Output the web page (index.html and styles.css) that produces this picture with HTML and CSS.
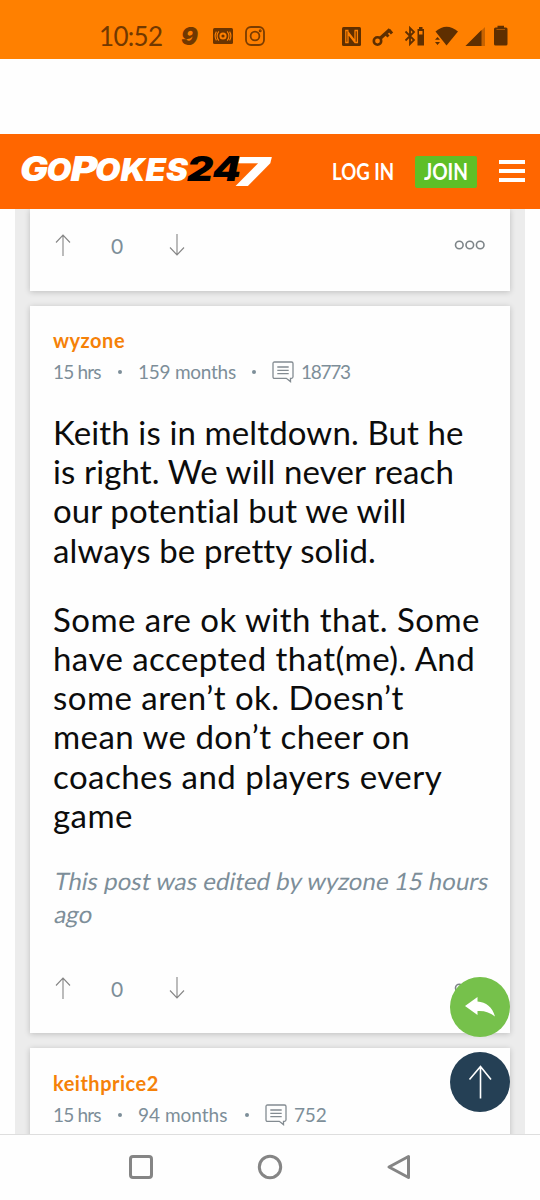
FILE: index.html
```html
<!DOCTYPE html>
<html lang="en">
<head>
    <meta charset="UTF-8">
    <meta name="viewport" content="width=device-width, initial-scale=1.0">
    <title>GoPokes247</title>
    <link rel="stylesheet" href="styles.css">
</head>
<body>
    <svg class="symbols">
        <symbol id="up" viewBox="0 0 16 22"><path d="M8 1.2V22M1 8.5L8 1L15 8.5"/></symbol>
        <symbol id="down" viewBox="0 0 16 22"><path d="M8 0V20.8M1 13.5L8 21L15 13.5"/></symbol>
        <symbol id="dots" viewBox="0 0 32 10"><circle cx="5.3" cy="5" r="3.8"/><circle cx="15.8" cy="5" r="3.8"/><circle cx="26.2" cy="5" r="3.8"/></symbol>
        <symbol id="comment" viewBox="0 0 22 22"><path d="M2.5 1H19.5Q21 1 21 2.5V15.8Q21 17.3 19.5 17.3H18.5V20.6L14.3 17.3H2.5Q1 17.3 1 15.8V2.5Q1 1 2.5 1ZM5.3 6H16.7M5.3 9.3H16.7M5.3 12.6H16.7"/></symbol>
    </svg>

    <div class="status-bar">
        <span class="clock">10:52</span>
        <span class="nine">9</span>
        <svg class="cast" width="20" height="16" viewBox="0 0 20 16">
            <rect width="20" height="16" rx="1.5" fill="#6b3400"/>
            <circle cx="10" cy="8" r="2.6" fill="none" stroke="#ff8000" stroke-width="2"/>
            <path d="M5.8 3.3Q2.3 8 5.8 12.7M14.2 3.3Q17.7 8 14.2 12.7M3.4 3.6Q.8 8 3.4 12.4M16.6 3.6Q19.2 8 16.6 12.4" fill="none" stroke="#ff8000" stroke-width="1.1"/>
        </svg>
        <svg class="insta" width="20" height="20" viewBox="0 0 20 20" fill="none" stroke="#7a3c00" stroke-width="1.8">
            <rect x="1" y="1" width="18" height="18" rx="5"/>
            <circle cx="10" cy="10" r="4.4"/>
            <circle cx="15.2" cy="4.8" r=".6"/>
        </svg>
        <svg class="system" width="166" height="22" viewBox="0 0 166 22" fill="#5f2f00">
            <rect x="0" y="2" width="19" height="19" rx="1.5"/>
            <path d="M6.5 5.5H3.8V17.500H6V7L13 16V5.500M12.500 5.500H15.400V17.500H13L6 8.500" fill="none" stroke="#ff8000" stroke-width="1.3"/>
            <circle cx="35.500" cy="16" r="3.700" fill="none" stroke="#5f2f00" stroke-width="2.600"/>
            <path d="M38 13.500L48 4.500" fill="none" stroke="#5f2f00" stroke-width="3.600"/>
            <path d="M43.500 8.500L46.500 11.500M47 5L50 8.500" fill="none" stroke="#5f2f00" stroke-width="3"/>
            <path d="M63.500 6.500L72 15L68 19V3L72 7L63.500 15.500" fill="none" stroke="#5f2f00" stroke-width="1.8"/>
            <path d="M75.500 4H77V2H80.500V4H82V20.500H75.500ZM77 6V9.500H80.500V6Z" fill-rule="evenodd"/>
            <path d="M93.500 6.500Q104.500 -3 116 6.500L104.500 20.500Z"/>
            <path d="M93 14.800L95.500 12L98 14.800ZM93 17L95.500 20L98 17Z"/>
            <path d="M123.500 21L143 2V21Z" opacity=".35"/>
            <path d="M123.500 21L139.500 5V21Z"/>
            <path d="M153.500 2.500H155.500V.8H162V2.500H164Q165.500 2.500 165.500 4V19Q165.500 20.500 164 20.500H153.500Q152 20.500 152 19V4Q152 2.500 153.500 2.500Z"/>
            <path d="M154.500 4.500H163" stroke="#ff8000" stroke-width=".8" opacity=".6"/>
        </svg>
    </div>

    <header class="site-header">
        <svg class="logo" width="256" height="60" viewBox="0 0 256 60">
            <g font-family="Inter, 'Liberation Sans', sans-serif" font-weight="900" font-style="italic" fill="#fff">
                <text x="0" y="39" font-size="34" textLength="28" lengthAdjust="spacingAndGlyphs">G</text>
                <text x="26.500" y="39" font-size="31" textLength="25" lengthAdjust="spacingAndGlyphs">O</text>
                <text x="50.500" y="39" font-size="34" textLength="27" lengthAdjust="spacingAndGlyphs">P</text>
                <text x="75" y="39" font-size="31" textLength="93" lengthAdjust="spacingAndGlyphs">OKES</text>
                <text x="167" y="39" font-size="34" textLength="54" lengthAdjust="spacingAndGlyphs" fill="#000">24</text>
                <text x="214" y="44" font-size="40" textLength="35" lengthAdjust="spacingAndGlyphs">7</text>
            </g>
        </svg>
        <a class="login"><span>LOG IN</span></a>
        <a class="join"><span>JOIN</span></a>
        <div class="menu"><i></i><i></i><i></i></div>
    </header>

    <main class="content">
        <div class="thread">
            <article class="post post-prev">
                <div class="actions">
                    <svg class="arrow"><use href="#up"/></svg>
                    <span class="votes">0</span>
                    <svg class="arrow"><use href="#down"/></svg>
                    <svg class="dots"><use href="#dots"/></svg>
                </div>
            </article>

            <article class="post post-main">
                <h2 class="author">wyzone</h2>
                <div class="meta">
                    <span class="age">15 hrs</span><b></b><span class="member">159 months</span><b></b>
                    <svg class="comment"><use href="#comment"/></svg><span class="count">18773</span>
                </div>
                <div class="body">
                    <p>Keith is in meltdown. But he<br>is right. We will never reach<br>our potential but we will<br>always be pretty solid.</p>
                    <p>Some are ok with that. Some<br>have accepted that(me). And<br>some aren’t ok. Doesn’t<br>mean we don’t cheer on<br>coaches and players every<br>game</p>
                </div>
                <p class="edited"><span>This post was edited by wyzone 15 hours</span> <span>ago</span></p>
                <div class="actions">
                    <svg class="arrow"><use href="#up"/></svg>
                    <span class="votes">0</span>
                    <svg class="arrow"><use href="#down"/></svg>
                    <svg class="dots"><use href="#dots"/></svg>
                </div>
            </article>

            <article class="post post-next">
                <h2 class="author">keithprice2</h2>
                <div class="meta">
                    <span class="age">15 hrs</span><b></b><span class="member member-short">94 months</span><b></b>
                    <svg class="comment"><use href="#comment"/></svg><span class="count">752</span>
                </div>
            </article>
        </div>
    </main>

    <div class="floating">
        <div class="fab reply">
            <svg width="30" height="20" viewBox="0 0 30 20"><path d="M0 9L12.500 0V4.500C21 5 27.500 10 30 19.500C25.500 15.500 19 13.500 12.500 14V18Z" fill="#fff"/></svg>
        </div>
        <div class="fab top">
            <svg width="24" height="34" viewBox="0 0 24 34" fill="none" stroke="#fff" stroke-width="1.6"><path d="M12.500 1.500V33.500M1.500 14.500L12.500 1.500L23 14.500"/></svg>
        </div>
    </div>

    <nav class="nav-bar">
        <svg width="26" height="26" viewBox="0 0 26 26"><rect x="2.500" y="2.500" width="21" height="21" rx="2.500"/></svg>
        <svg width="26" height="26" viewBox="0 0 26 26"><circle cx="13" cy="13" r="10.700"/></svg>
        <svg width="26" height="26" viewBox="0 0 26 26"><path d="M3 13L22.500 2.500V23.500Z"/></svg>
    </nav>
</body>
</html>
```
FILE: styles.css
```css
* {
    box-sizing: border-box;
}
body {
    margin: 0;
    width: 540px;
    height: 1200px;
    overflow: hidden;
    position: relative;
    display: flex;
    flex-direction: column;
    font-family: Lato, "Liberation Sans", sans-serif;
    background: #fefefe;
    color: #0c0c0c;
}
h2, p {
    margin: 0;
}
svg {
    display: block;
    flex: none;
}
.symbols {
    position: absolute;
    width: 0;
    height: 0;
}

/* status bar */
.status-bar {
    height: 59px;
    flex: none;
    display: flex;
    align-items: center;
    padding: 13px 32px 0 99px;
    background: #ff8000;
    color: #713800;
}
.clock {
    width: 82px;
    font-size: 26px;
    letter-spacing: -0.7px;
}
.nine {
    width: 32px;
    font-family: Inter, sans-serif;
    font-size: 25px;
    font-weight: 900;
    font-style: italic;
}
.insta {
    margin-left: 12px;
}
.system {
    margin-left: auto;
}

/* site header */
.site-header {
    height: 75px;
    flex: none;
    margin-top: 75px;
    padding-left: 20px;
    display: flex;
    align-items: center;
    background: #ff6600;
    color: #fff;
    font-size: 23px;
    font-weight: bold;
}
.login, .join {
    white-space: nowrap;
}
.login span, .join span {
    display: inline-block;
    transform-origin: 0 50%;
}
.login {
    width: 83px;
    margin-left: 56px;
    margin-top: -2px;
}
.login span {
    transform: scaleX(0.81);
}
.join {
    width: 62px;
    height: 32px;
    padding-left: 9px;
    line-height: 30px;
    border-radius: 2px;
    background: #5fbf27;
}
.join span {
    transform: scaleX(0.83);
}
.menu {
    display: flex;
    flex-direction: column;
    gap: 5px;
    margin-left: 22px;
    margin-top: -2px;
}
.menu i {
    width: 26px;
    height: 4px;
    background: #fff;
}

/* thread */
.content {
    height: 925px;
    flex: none;
    padding: 0 15px;
    overflow: hidden;
}
.thread {
    height: 925px;
    padding: 0 15px;
    display: flex;
    flex-direction: column;
    gap: 15px;
    background: #ececec;
}
.post {
    flex: none;
    padding: 0 23px;
    background: #fefefe;
    box-shadow: 0 1px 6px rgba(0, 0, 0, 0.2);
}
.post-prev {
    height: 82px;
    padding-top: 25px;
}
.post-main {
    height: 727px;
    padding-top: 22px;
}
.post-next {
    height: 110px;
    padding-top: 23px;
}
.author {
    font-size: 20px;
    line-height: 24px;
    letter-spacing: 0.5px;
    color: #f58108;
}
.meta {
    height: 24px;
    margin-top: 7px;
    display: flex;
    align-items: center;
    font-size: 19px;
    color: #7d8e99;
    white-space: nowrap;
}
.meta b {
    width: 4px;
    height: 4px;
    margin: 2px 16px 0;
    border-radius: 50%;
    background: #7d8e99;
}
.age {
    width: 49px;
    letter-spacing: -0.8px;
}
.member {
    width: 98px;
    letter-spacing: -0.25px;
}
.member-short {
    width: 91px;
    letter-spacing: 0;
}
.comment {
    width: 22px;
    height: 22px;
    margin: 2px 7px 0 0;
    fill: none;
    stroke: #838b91;
    stroke-width: 1.3;
}
.count {
    letter-spacing: -1.3px;
}
.member-short ~ .count {
    letter-spacing: -0.2px;
}
.body {
    margin-top: 30px;
    font-size: 33px;
    line-height: 39.2px;
    letter-spacing: 0.12px;
    white-space: nowrap;
}
.body p + p {
    margin-top: 30px;
    letter-spacing: 0.46px;
}
.edited {
    margin-top: 29px;
    padding-left: 2px;
    font-size: 24px;
    line-height: 33px;
    letter-spacing: 0.03px;
    color: #7d8e99;
    white-space: nowrap;
}
.edited span {
    display: block;
    width: max-content;
    transform: skewX(-11deg);
}
.actions {
    display: flex;
    align-items: center;
    height: 22px;
}
.post-main .actions {
    margin-top: 47px;
}
.arrow {
    width: 16px;
    height: 22px;
    margin-left: 2px;
    fill: none;
    stroke: #858585;
    stroke-width: 1.1;
}
.votes {
    width: 96px;
    padding-top: 1px;
    padding-left: 40px;
    font-size: 21px;
    color: #7d8e99;
}
.dots {
    width: 32px;
    height: 10px;
    margin-left: auto;
    margin-right: 1px;
    fill: none;
    stroke: #7d8488;
    stroke-width: 1.6;
}

/* buttons over the thread */
.floating {
    position: absolute;
    left: 450px;
    top: 977px;
    display: flex;
    flex-direction: column;
    gap: 15px;
}
.fab {
    width: 60px;
    height: 60px;
    border-radius: 50%;
    display: flex;
    align-items: center;
    justify-content: center;
}
.reply {
    background: #76c14b;
}
.top {
    background: #254055;
}

/* android buttons */
.nav-bar {
    height: 66px;
    flex: none;
    border-top: 1px solid #dedede;
    padding-bottom: 2px;
    display: flex;
    justify-content: center;
    align-items: center;
    gap: 103px;
    background: #fefefe;
}
.nav-bar svg {
    fill: none;
    stroke: #858585;
    stroke-width: 3;
    stroke-linejoin: round;
}
```
